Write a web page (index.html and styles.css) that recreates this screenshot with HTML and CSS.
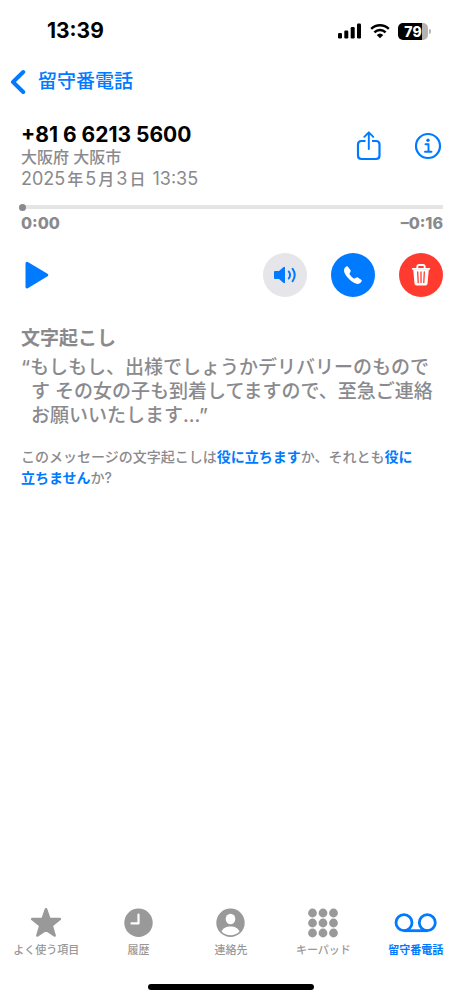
FILE: index.html
```html
<!DOCTYPE html>
<html lang="ja">
<head>
<meta charset="utf-8">
<meta name="viewport" content="width=device-width, initial-scale=1">
<title>留守番電話</title>
<link rel="stylesheet" href="styles.css">
</head>
<body>
<div class="screen">
  <header class="status">
    <time class="clock">13:39</time>
    <div class="indicators">
      <svg width="24" height="16" viewBox="0 0 24 16" aria-hidden="true">
        <rect x="0" y="10" width="4" height="5.500" rx="1.200"/>
        <rect x="6.300" y="7.500" width="4" height="8" rx="1.200"/>
        <rect x="12.700" y="4" width="4" height="11.500" rx="1.200"/>
        <rect x="19" y="0.500" width="4" height="15" rx="1.200"/>
      </svg>
      <svg width="20" height="16" viewBox="0 0 20 16" aria-hidden="true">
        <path d="M1.200 5.800a12.800 12.800 0 0 1 17.600 0M4.400 9.300a8 8 0 0 1 11.200 0" fill="none" stroke="#000" stroke-width="2.500"/>
        <path d="M10 15.300 6.700 12a4.800 4.800 0 0 1 6.600 0z"/>
      </svg>
      <div class="battery"><span class="battery-level">79</span></div>
    </div>
  </header>

  <nav class="navbar">
    <a class="back" href="#">
      <svg width="16" height="26" viewBox="0 0 16 26" aria-hidden="true"><path d="M13.200 3 3 13l10.200 10" fill="none" stroke="currentColor" stroke-width="4" stroke-linecap="round" stroke-linejoin="round"/></svg>
      <span>留守番電話</span>
    </a>
  </nav>

  <main class="content">
    <section class="caller">
      <div class="caller-text">
        <h1>+81 6 6213 5600</h1>
        <p class="place">大阪府 大阪市</p>
        <p class="date">2025<span class="unit">年</span>5<span class="unit">月</span>3<span class="unit">日</span> 13:35</p>
      </div>
      <div class="caller-actions">
        <button type="button" aria-label="共有">
          <svg width="28" height="32" viewBox="0 0 28 32" fill="none" stroke="currentColor" stroke-width="2.200" stroke-linecap="round" stroke-linejoin="round" aria-hidden="true"><path d="M10.500 11H6.500Q3 11 3 14.500V25.500Q3 29 6.500 29H21Q24.500 29 24.500 25.500V14.500Q24.500 11 21 11H17" stroke-linecap="butt"/><path d="M13.800 19V2.500M9.300 6.800 13.800 2.300 18.300 6.800" stroke-width="1.900"/></svg>
        </button>
        <button type="button" aria-label="情報">
          <svg width="28" height="28" viewBox="0 0 28 28" fill="none" stroke="currentColor" aria-hidden="true"><circle cx="14" cy="14" r="12" stroke-width="2.200"/><circle cx="14" cy="8.300" r="1.700" fill="currentColor" stroke="none"/><path d="M11.500 12.200h3v7.300M11 19.800h6.500" stroke-width="1.900" stroke-linecap="round"/></svg>
        </button>
      </div>
    </section>

    <section class="player">
      <input class="scrubber" type="range" min="0" max="16" value="0" aria-label="再生位置">
      <div class="times"><span>0:00</span><span>–0:16</span></div>
      <div class="controls">
        <button class="play" type="button" aria-label="再生">
          <svg width="28" height="32" viewBox="0 0 28 32" aria-hidden="true"><path d="M5 4.200 24.800 16 5 28z" fill="currentColor" stroke="currentColor" stroke-width="3" stroke-linejoin="round"/></svg>
        </button>
        <button class="round speaker" type="button" aria-label="スピーカー">
          <svg width="24" height="20" viewBox="0 0 24 20" aria-hidden="true"><path d="M2 6H6L10.300 2.200Q12 1 12 3V17Q12 19 10.300 17.800L6 14H2Q1 14 1 13V7Q1 6 2 6z" fill="currentColor"/><path d="M15.800 6.500a6 6 0 0 1 0 7M19.600 3.800a11 11 0 0 1 0 12.400" fill="none" stroke="currentColor" stroke-width="2" stroke-linecap="round"/></svg>
        </button>
        <button class="round call" type="button" aria-label="発信">
          <svg width="22" height="22" viewBox="0 0 22 22" aria-hidden="true"><path d="M2.300 4.800C3.200 3 4.600 1.700 5.500 2.300L8.600 6.200C9.200 7.300 8 8.400 7.500 9.400C7.100 10.500 11.400 14.800 12.600 14.500C13.600 14.100 14.800 12.700 15.800 13.400L19.500 16C20.500 16.900 19 18.700 17.300 19.600C14.600 20.700 10.500 18.500 7 15C3.300 11.300 1.200 7.600 2.300 4.800z" fill="currentColor"/></svg>
        </button>
        <button class="round delete" type="button" aria-label="削除">
          <svg width="20" height="24" viewBox="0 0 20 24" aria-hidden="true"><path d="M2.200 6.500H17.800L16.500 20.500Q16.300 22.500 14.500 22.500H5.500Q3.700 22.500 3.500 20.500z" fill="currentColor"/><path d="M1.700 5.800H18.300M6.300 5.500V3.700Q6.300 2 8 2H12Q13.700 2 13.700 3.700V5.500" fill="none" stroke="currentColor" stroke-width="1.800" stroke-linecap="round"/><path d="M6.700 9 7.200 19.500M10 9V19.500M13.300 9 12.800 19.500" stroke="#ff3b30" stroke-width="1.300" stroke-linecap="round"/></svg>
        </button>
      </div>
    </section>

    <section class="transcript">
      <h2>文字起こし</h2>
      <p class="quote">“もしもし、出様でしょうかデリバリーのものです その女の子も到着してますので、至急ご連絡お願いいたします...”</p>
      <p class="feedback">このメッセージの文字起こしは<a href="#">役に立ちます</a>か、それとも<a href="#">役に立ちません</a>か?</p>
    </section>
  </main>

  <nav class="tabs">
    <a href="#">
      <svg width="34" height="32" viewBox="0 0 34 32" aria-hidden="true"><path d="M17 2.300 20.300 11.700 30.800 12 22.700 18.600 25.600 28.500 17 22.700 8.400 28.500 11.300 18.600 3.200 12 13.700 11.700z" fill="currentColor" stroke="currentColor" stroke-width="2.600" stroke-linejoin="round"/></svg>
      <span>よく使う項目</span>
    </a>
    <a href="#">
      <svg width="32" height="32" viewBox="0 0 32 32" aria-hidden="true"><circle cx="15.500" cy="15.700" r="14.200" fill="currentColor"/><path d="M15.500 7.700V16.400H8.500" fill="none" stroke="#fff" stroke-width="2.200" stroke-linecap="round" stroke-linejoin="round"/></svg>
      <span>履歴</span>
    </a>
    <a href="#">
      <svg width="32" height="32" viewBox="0 0 32 32" aria-hidden="true"><circle cx="15.500" cy="15.700" r="14.200" fill="currentColor"/><ellipse cx="15.500" cy="12" rx="4.800" ry="5.300" fill="#fff"/><path d="M6.500 24.500C8 20.700 11.500 19.400 15.500 19.400S23 20.700 24.500 24.500A12.600 12.600 0 0 1 6.500 24.500z" fill="#fff"/></svg>
      <span>連絡先</span>
    </a>
    <a href="#">
      <svg width="32" height="32" viewBox="0 0 32 32" fill="currentColor" aria-hidden="true"><circle cx="5.500" cy="6" r="4.400"/><circle cx="16" cy="6" r="4.400"/><circle cx="26.500" cy="6" r="4.400"/><circle cx="5.500" cy="16" r="4.400"/><circle cx="16" cy="16" r="4.400"/><circle cx="26.500" cy="16" r="4.400"/><circle cx="5.500" cy="26" r="4.400"/><circle cx="16" cy="26" r="4.400"/><circle cx="26.500" cy="26" r="4.400"/></svg>
      <span>キーパッド</span>
    </a>
    <a class="current" href="#" aria-current="page">
      <svg width="44" height="32" viewBox="0 0 44 32" fill="none" stroke="currentColor" stroke-width="2.800" aria-hidden="true"><circle cx="10" cy="15.700" r="8"/><circle cx="33.300" cy="15.700" r="8"/><path d="M10 23.700h23.300"/></svg>
      <span>留守番電話</span>
    </a>
  </nav>
  <div class="home-bar"></div>
</div>
</body>
</html>
```
FILE: styles.css
```css
* {
  box-sizing: border-box;
}

body {
  margin: 0;
  background: #fff;
  color: #000;
  font-family: Inter, "Noto Sans CJK JP", sans-serif;
}

h1, h2, p {
  margin: 0;
}

a {
  color: #007aff;
  text-decoration: none;
}

button {
  display: flex;
  align-items: center;
  justify-content: center;
  padding: 0;
  border: 0;
  background: none;
  color: #007aff;
}

svg {
  display: block;
  flex: none;
}

.screen {
  display: flex;
  flex-direction: column;
  min-height: 100vh;
}

.status {
  display: flex;
  align-items: center;
  justify-content: space-between;
  padding: 18px 34px 0 47px;
}

.clock {
  font-size: 21px;
  font-weight: 700;
  line-height: 26px;
}

.indicators {
  display: flex;
  align-items: center;
  gap: 8px;
}

.battery {
  position: relative;
  width: 30px;
  height: 17px;
  border-radius: 5px;
  background: linear-gradient(90deg, #000 79%, #b3b3b3 79%);
}

.battery::after {
  content: "";
  position: absolute;
  top: 6px;
  right: -3px;
  width: 2px;
  height: 5px;
  border-radius: 0 2px 2px 0;
  background: #b3b3b3;
}

.battery-level {
  display: block;
  color: #fff;
  font-size: 14px;
  font-weight: 800;
  line-height: 17px;
  text-align: center;
}

.navbar {
  padding: 24px 10px 0;
}

.back {
  display: inline-flex;
  align-items: center;
  gap: 12px;
  font-size: 19px;
  font-weight: 500;
  line-height: 28px;
}

.content {
  flex: 1;
  padding: 25px 20px 0 21px;
}

.caller {
  display: flex;
  justify-content: space-between;
}

h1 {
  font-size: 21px;
  font-weight: 700;
  line-height: 22px;
}

.place,
.date {
  color: #8a8a8e;
  line-height: 22px;
}

.place {
  font-size: 16px;
  font-weight: 500;
}

.date {
  font-size: 18px;
}

.unit {
  padding: 0 2px;
  font-size: 16px;
  font-weight: 500;
}

.caller-actions {
  display: flex;
  align-items: center;
  align-self: flex-start;
  gap: 31px;
  padding-top: 6px;
}

.player {
  margin: 13px -1px 0 -2px;
}

.scrubber {
  appearance: none;
  display: block;
  width: 100%;
  height: 8px;
  margin: 0;
  border-radius: 2px;
  background: linear-gradient(#e5e5e5, #e5e5e5) center / 100% 4px no-repeat;
}

.scrubber::-webkit-slider-thumb {
  appearance: none;
  width: 7px;
  height: 7px;
  border-radius: 50%;
  background: #8a8a8e;
}

.times {
  display: flex;
  justify-content: space-between;
  padding-left: 2px;
  color: #8a8a8e;
  font-size: 16px;
  font-weight: 800;
  line-height: 24px;
}

.controls {
  display: flex;
  align-items: center;
  gap: 24px;
  margin-top: 18px;
  padding-left: 3px;
}

.play {
  margin-right: auto;
}

.round {
  width: 44px;
  height: 44px;
  border-radius: 50%;
}

.speaker {
  background: #e5e5ea;
}

.call {
  background: #007aff;
  color: #fff;
}

.delete {
  background: #ff3b30;
  color: #fff;
}

.transcript {
  margin-top: 30px;
  color: #8a8a8e;
}

h2 {
  font-size: 19px;
  font-weight: 700;
  line-height: 24px;
}

.quote {
  margin-top: 5px;
  padding-left: 10px;
  font-size: 19px;
  font-weight: 500;
  line-height: 24px;
  text-indent: -10px;
}

.feedback {
  margin-top: 18px;
  padding-right: 16px;
  font-size: 14px;
  font-weight: 500;
  line-height: 21px;
}

.feedback a {
  font-weight: 700;
}

.tabs {
  display: grid;
  grid-template-columns: repeat(5, 1fr);
}

.tabs a {
  display: flex;
  flex-direction: column;
  align-items: center;
  gap: 3px;
  color: #999;
  font-size: 11px;
  font-weight: 500;
  line-height: 16px;
  white-space: nowrap;
}

.tabs .current {
  color: #007aff;
  font-weight: 700;
}

.home-bar {
  width: 36%;
  height: 6px;
  margin: 26px auto 9px;
  border-radius: 3px;
  background: #000;
}
```
